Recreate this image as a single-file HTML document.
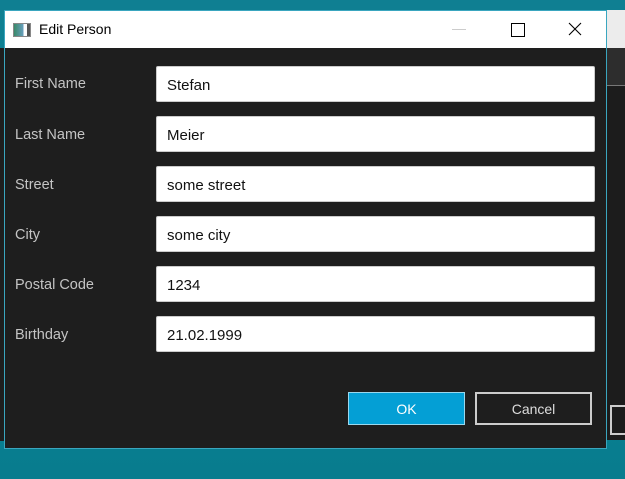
<!DOCTYPE html>
<html><head><style>
body{margin:0;width:625px;height:479px;overflow:hidden;position:relative;background:linear-gradient(180deg,#0f7f92 0%,#0a8596 50%,#087c8e 100%);font-family:"Segoe UI","Liberation Sans",sans-serif}
.abs{position:absolute}
.lbl{position:absolute;left:15px;color:#c4c4c4;font-size:14.5px}
.fld{position:absolute;left:156px;width:439px;height:36px;background:#fff;border:1px solid #ccc;border-radius:2px;box-sizing:border-box;font-size:15px;color:#111;padding-left:10px;line-height:37px}
</style></head><body>
<div class="abs" style="left:0;top:48px;width:5px;height:393px;background:#1e1e1e"></div>
<div class="abs" style="left:607px;top:10px;width:18px;height:38px;background:#ececec"></div>
<div class="abs" style="left:607px;top:48px;width:18px;height:37px;background:#2d2d2d;border-bottom:1px solid #777"></div>
<div class="abs" style="left:607px;top:86px;width:18px;height:354px;background:#1c1c1c"></div>
<div class="abs" style="left:610px;top:405px;width:20px;height:30px;border:2px solid #ccc;box-sizing:border-box"></div>
<div class="abs" style="left:4px;top:10px;width:603px;height:439px;border:1px solid #3aa6bf;box-sizing:border-box;background:#1e1e1e">
 <div class="abs" style="left:0;top:0;width:601px;height:37px;background:#fff">
  <div class="abs" style="left:8px;top:12px;width:16px;height:12px;border:1px solid #888;background:linear-gradient(90deg,#3a8a6a 0,#6aa0c0 60%,#fff 60%,#fff 80%,#555 80%)"></div>
  <div class="abs" style="left:34px;top:10px;font-size:14px;color:#000">Edit Person</div>
  <div class="abs" style="left:447px;top:18px;width:14px;height:1px;background:#ccc"></div>
  <div class="abs" style="left:506px;top:12px;width:12px;height:12px;border:1px solid #000"></div>
  <svg class="abs" style="left:563px;top:11px" width="14" height="14"><path d="M1 1L13 13M13 1L1 13" stroke="#000" stroke-width="1.1"/></svg>
 </div>
</div>
<div class="lbl" style="top:76px">First Name</div>
<div class="lbl" style="top:127px">Last Name</div>
<div class="lbl" style="top:177px">Street</div>
<div class="lbl" style="top:227px">City</div>
<div class="lbl" style="top:277px">Postal Code</div>
<div class="lbl" style="top:327px">Birthday</div>
<div class="fld" style="top:66px">Stefan</div>
<div class="fld" style="top:116px">Meier</div>
<div class="fld" style="top:166px">some street</div>
<div class="fld" style="top:216px">some city</div>
<div class="fld" style="top:266px">1234</div>
<div class="fld" style="top:316px">21.02.1999</div>
<div class="abs" style="left:348px;top:392px;width:117px;height:33px;background:#049fd5;border:1px solid #9ad8ee;box-sizing:border-box;color:#fff;font-size:14px;text-align:center;line-height:33px">OK</div>
<div class="abs" style="left:475px;top:392px;width:117px;height:33px;border:2px solid #ccc;box-sizing:border-box;color:#ddd;font-size:14px;text-align:center;line-height:31px">Cancel</div>
</body></html>
